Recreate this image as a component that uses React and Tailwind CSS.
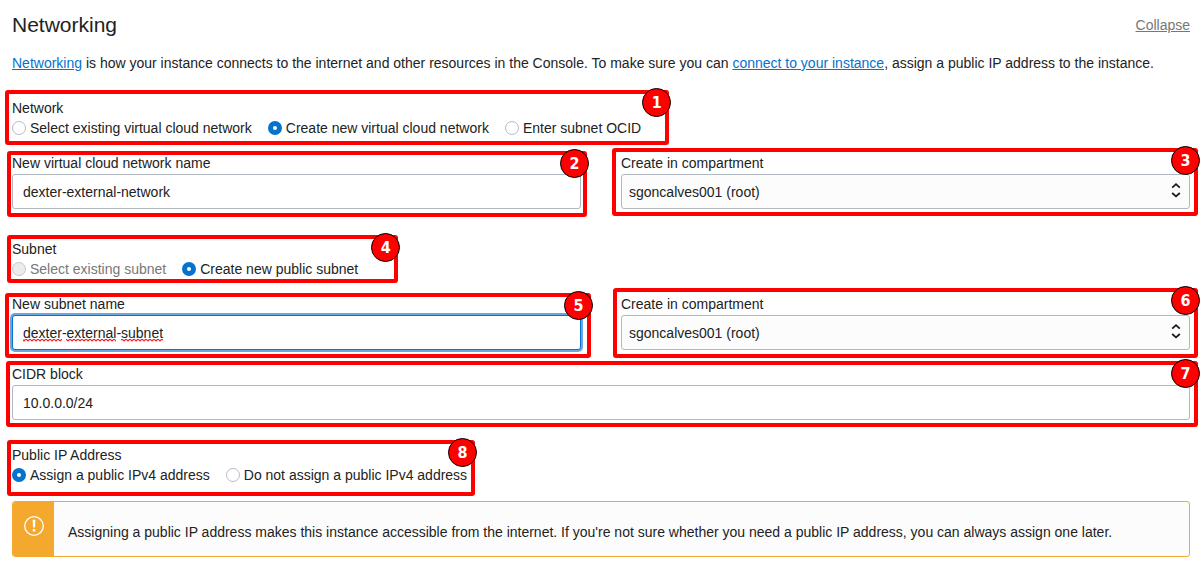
import React from "react";

function Marker({ n, className }) {
  return (
    <div className={"pointer-events-none absolute z-10 rounded-[3px] border-4 border-[#ff0000] " + className}>
      <span className="absolute -top-1.5 -right-1.5 flex size-[29px] items-center justify-center rounded-full border border-black bg-[#ff0000] font-['DejaVu_Sans_Condensed','DejaVu_Sans',sans-serif] text-base leading-5 font-bold text-white">
        {n}
      </span>
    </div>
  );
}

function RadioGroup({ legend, name, options, marker, className }) {
  return (
    <div role="radiogroup" aria-labelledby={name + "-label"} className={"relative w-fit " + className}>
      <div id={name + "-label"}>{legend}</div>
      <div className="flex flex-wrap gap-x-4">
        {options.map((o) => (
          <label key={o.text} className={"flex items-center gap-1 " + (o.disabled ? "text-[#777777]" : "")}>
            <input
              type="radio"
              name={name}
              defaultChecked={o.checked}
              disabled={o.disabled}
              className="size-3.5 shrink-0 appearance-none rounded-full border border-[#b4bcc6] bg-white checked:border-[5px] checked:border-[#0572ce] disabled:border-[#c4c9cf] disabled:bg-[#ececec]"
            />
            {o.text}
          </label>
        ))}
      </div>
      {marker}
    </div>
  );
}

function TextField({ id, label, value, focused, marker, children }) {
  return (
    <div className="relative">
      <label htmlFor={id} className="block leading-[22px]">{label}</label>
      <div className="relative">
        <input
          id={id}
          type="text"
          defaultValue={value}
          spellCheck={false}
          className={
            "block h-[35px] w-full rounded-[3px] border bg-white px-2.5 outline-none " +
            (focused ? "border-[#0572ce] ring-2 ring-[#6aa6e1]" : "border-[#b1b8c2]")
          }
        />
        {children}
      </div>
      {marker}
    </div>
  );
}

function SelectField({ id, label, value, marker }) {
  return (
    <div className="relative">
      <label htmlFor={id} className="block leading-[22px]">{label}</label>
      <div className="relative">
        <select
          id={id}
          defaultValue={value}
          className="block h-[35px] w-full appearance-none rounded-[3px] border border-[#b1b8c2] bg-[#fcfcfc] pr-8 pl-[7px] outline-none"
        >
          <option>{value}</option>
        </select>
        <svg
          aria-hidden="true"
          viewBox="0 0 10 16"
          className="pointer-events-none absolute top-2 right-[9px] h-4 w-2.5 fill-none stroke-[#1a1a1a] stroke-[1.8]"
        >
          <path d="M1.2 5.6 5 2.2l3.8 3.4M1.2 11 5 14.4l3.8-3.4" />
        </svg>
      </div>
      {marker}
    </div>
  );
}

function Squiggles() {
  return (
    <svg aria-hidden="true" className="pointer-events-none absolute top-6 left-[11px] h-[3px] w-[141px]">
      <defs>
        <pattern id="squiggle" width="4" height="3" patternUnits="userSpaceOnUse">
          <path d="M-1 0 1 2 3 0 5 2" fill="none" stroke="#f5222a" strokeWidth="1.2" />
        </pattern>
      </defs>
      <rect x="0" width="39" height="3" fill="url(#squiggle)" />
      <rect x="43" width="50" height="3" fill="url(#squiggle)" />
      <rect x="98" width="42" height="3" fill="url(#squiggle)" />
    </svg>
  );
}

export default function App() {
  return (
    <main className="bg-white px-3 pt-2.5 pb-2.5 font-['Liberation_Sans',Arial,sans-serif] text-sm leading-5 text-[#222222]">
      <header className="flex items-center justify-between">
        <h1 className="text-[21px] leading-[30px]">Networking</h1>
        <a href="#collapse" className="text-[#777777] underline">Collapse</a>
      </header>

      <p className="mt-[13px]">
        <a href="#networking" className="text-[#0572ce] underline">Networking</a> is how your instance connects to the
        internet and other resources in the Console. To make sure you can{" "}
        <a href="#connect" className="text-[#0572ce] underline">connect to your instance</a>, assign a public IP
        address to the instance.
      </p>

      <RadioGroup
        className="mt-[25px]"
        legend="Network"
        name="network"
        options={[
          { text: "Select existing virtual cloud network" },
          { text: "Create new virtual cloud network", checked: true },
          { text: "Enter subnet OCID" },
        ]}
        marker={<Marker n={1} className="-top-2 -right-7 -bottom-[7px] -left-[7px]" />}
      />

      <div className="mt-3.5 grid grid-cols-2 gap-10">
        <TextField
          id="vcn-name"
          label="New virtual cloud network name"
          value="dexter-external-network"
          marker={<Marker n={2} className="-top-px -right-1.5 -bottom-2 -left-[5px]" />}
        />
        <SelectField
          id="vcn-compartment"
          label="Create in compartment"
          value="sgoncalves001 (root)"
          marker={<Marker n={3} className="-top-1 -right-2 -bottom-[7px] -left-[9px]" />}
        />
      </div>

      <RadioGroup
        className="mt-[30px]"
        legend="Subnet"
        name="subnet"
        options={[
          { text: "Select existing subnet", disabled: true },
          { text: "Create new public subnet", checked: true },
        ]}
        marker={<Marker n={4} className="-top-1 -right-10 -bottom-1 -left-[5px]" />}
      />

      <div className="mt-3.5 grid grid-cols-2 gap-10">
        <TextField
          id="subnet-name"
          label="New subnet name"
          value="dexter-external-subnet"
          focused
          marker={<Marker n={5} className="top-0 -right-2.5 -bottom-2 -left-[7px]" />}
        >
          <Squiggles />
        </TextField>
        <SelectField
          id="subnet-compartment"
          label="Create in compartment"
          value="sgoncalves001 (root)"
          marker={<Marker n={6} className="-top-[5px] -right-2 -bottom-2 -left-2" />}
        />
      </div>

      <div className="mt-[13px]">
        <TextField
          id="cidr"
          label="CIDR block"
          value="10.0.0.0/24"
          marker={<Marker n={7} className="-top-0.5 -right-2 -bottom-[7px] -left-1.5" />}
        />
      </div>

      <RadioGroup
        className="mt-[25px]"
        legend="Public IP Address"
        name="public-ip"
        options={[
          { text: "Assign a public IPv4 address", checked: true },
          { text: "Do not assign a public IPv4 address" },
        ]}
        marker={<Marker n={8} className="-top-[5px] -right-2 -bottom-[11px] -left-[5px]" />}
      />

      <div role="alert" className="mt-4 flex overflow-hidden rounded-[3px] border border-[#f4a82d] bg-[#fcfcfc]">
        <div className="flex w-[41px] shrink-0 justify-center bg-[#f4a82d] pt-3.5">
          <svg aria-hidden="true" viewBox="0 0 20 20" className="size-5">
            <circle cx="10" cy="10" r="9.3" fill="none" stroke="white" strokeWidth="1.3" />
            <path d="M8.6 3.8h2.8l-.4 7.6H9zM8.8 13h2.4v2.4H8.8z" fill="white" />
          </svg>
        </div>
        <p className="px-3.5 pt-5 pb-3.5">
          Assigning a public IP address makes this instance accessible from the internet. If you're not sure whether
          you need a public IP address, you can always assign one later.
        </p>
      </div>
    </main>
  );
}
